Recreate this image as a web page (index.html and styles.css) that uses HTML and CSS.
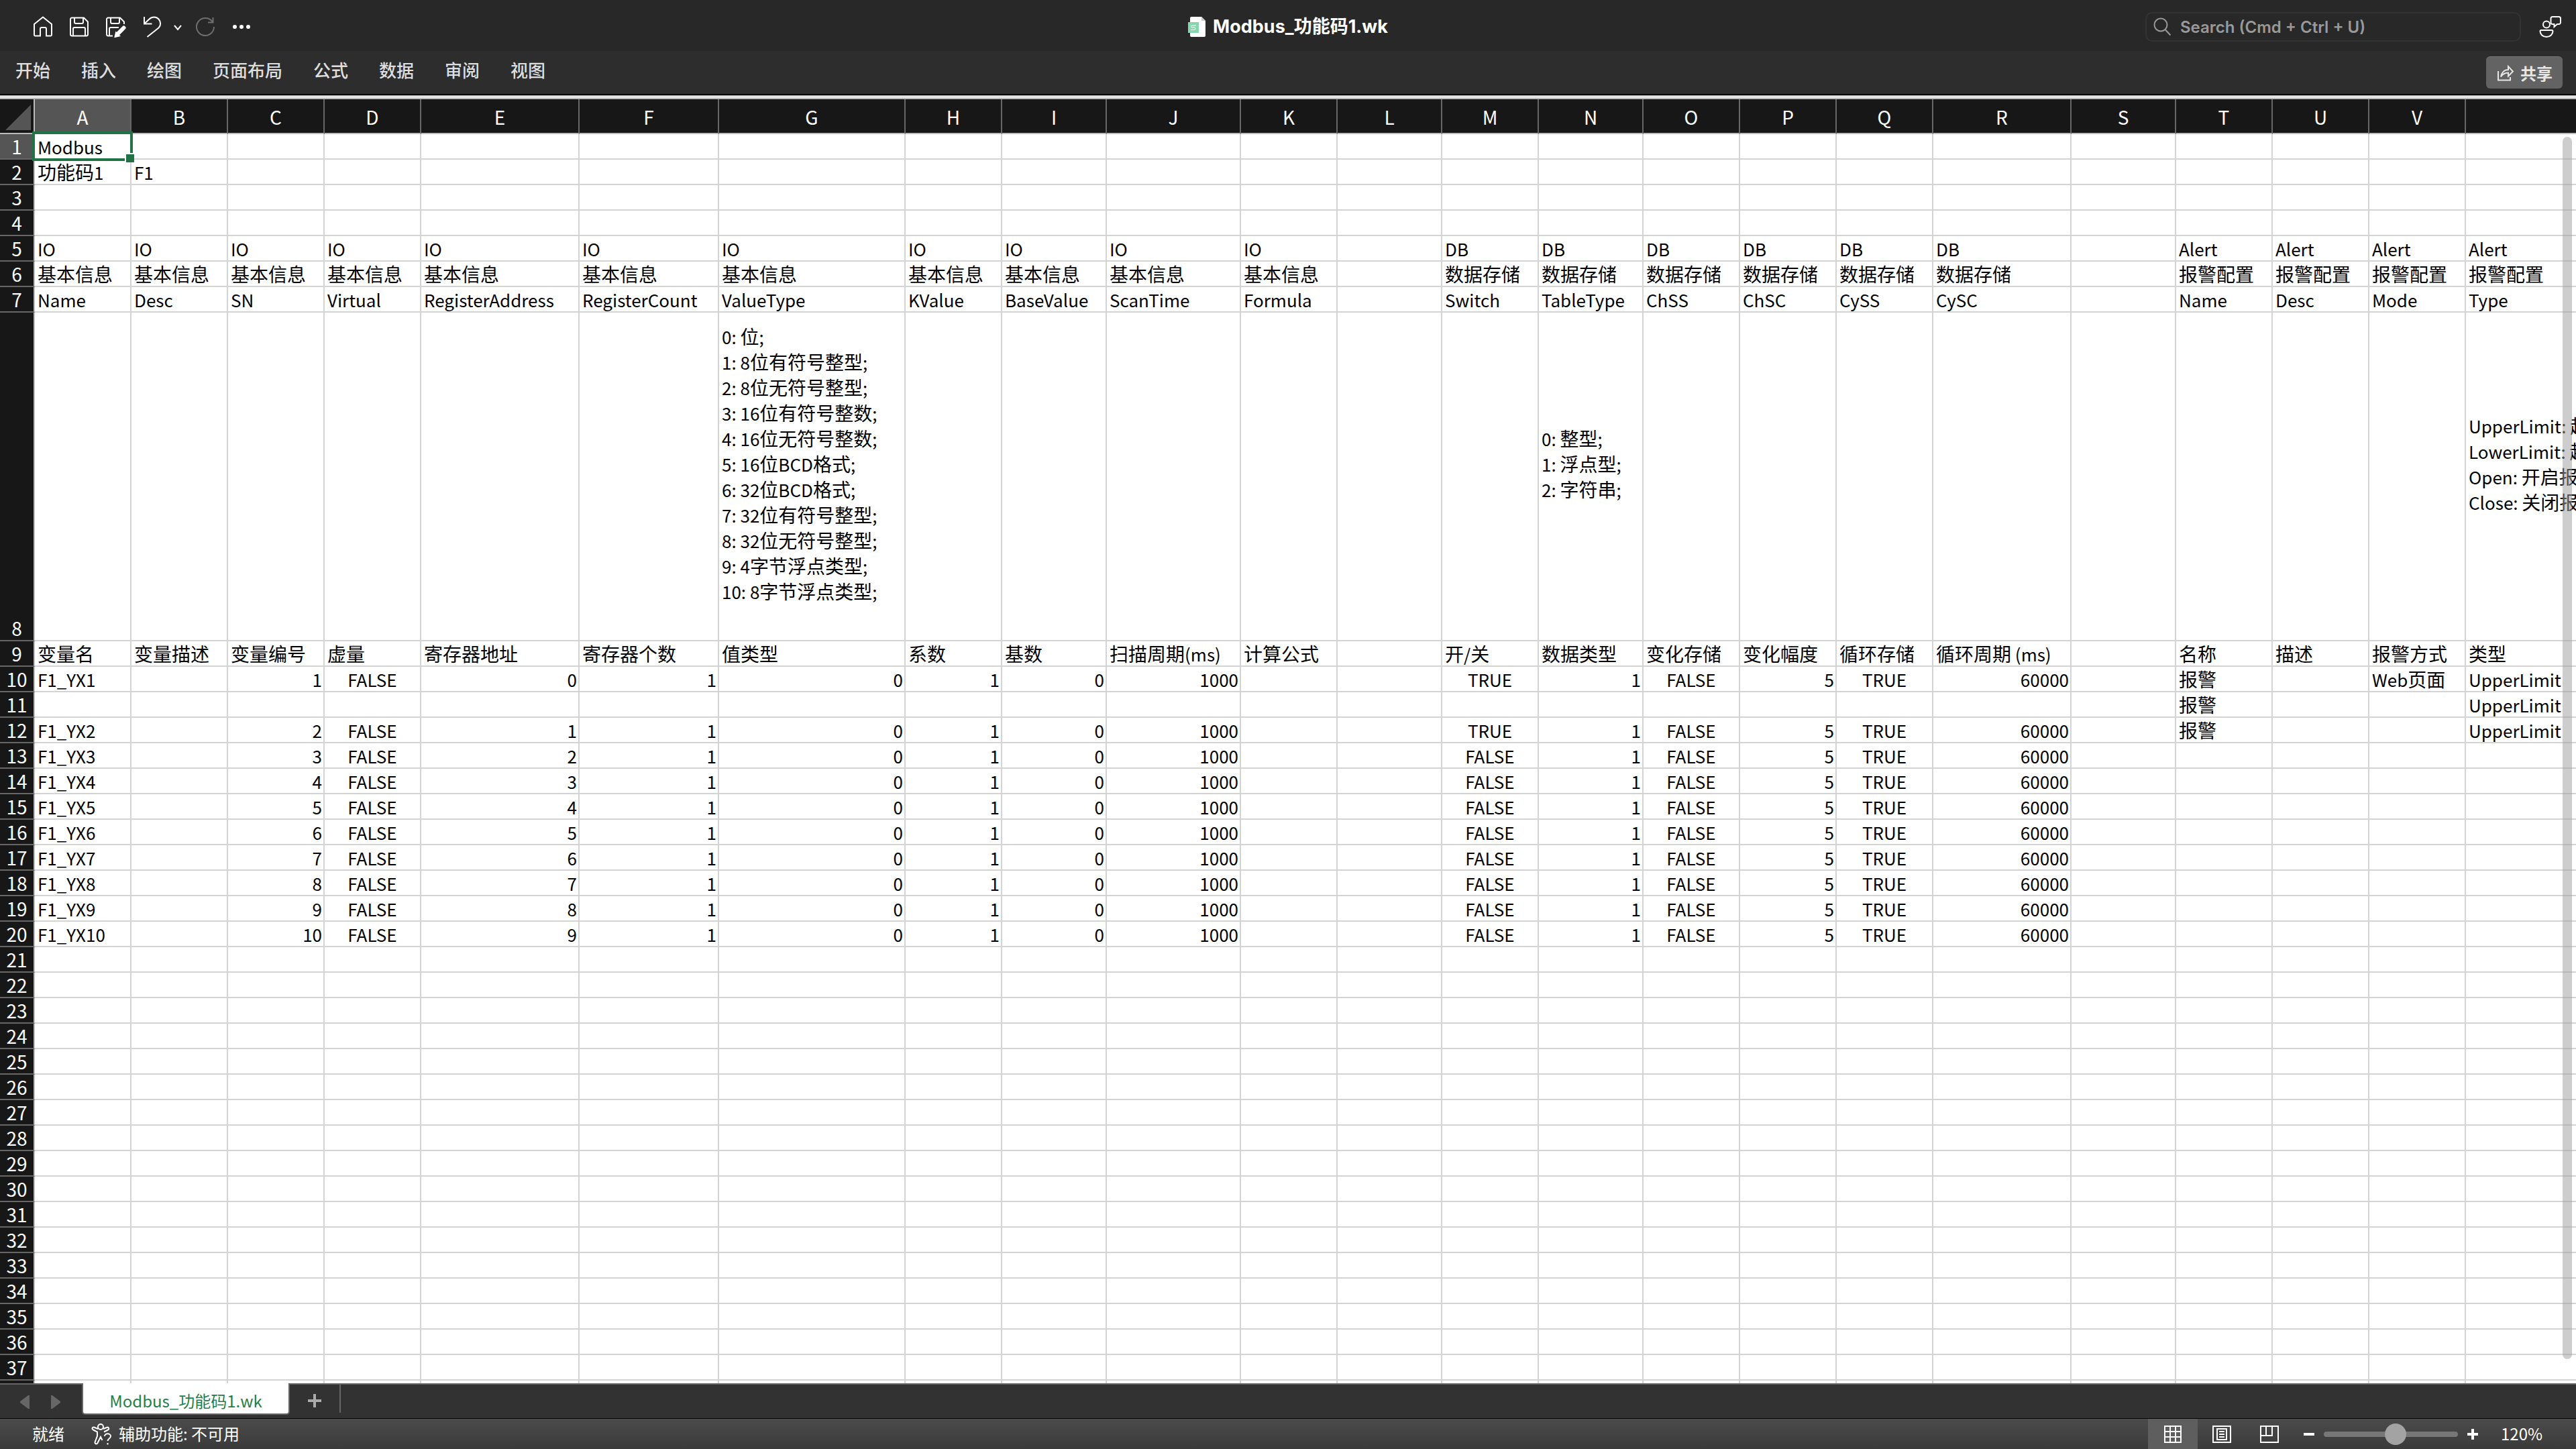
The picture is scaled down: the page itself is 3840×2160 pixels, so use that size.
FILE: index.html
```html
<!DOCTYPE html>
<html lang="zh-CN">
<head>
    <meta charset="UTF-8">
    <title>Modbus_功能码1.wk</title>
    <link rel="stylesheet" href="styles.css">
    <script src="script.js" defer></script>
</head>
<body>
    <header class="titlebar">
        <div class="quick">
            <button class="icon-btn" aria-label="主页"><svg width="32" height="32" viewBox="0 0 32 32"><path d="M3 28V12L16 1.500 29 12v16a1.500 1.500 0 0 1-1.500 1.500H21V19a2 2 0 0 0-2-2h-5a2 2 0 0 0-2 2v10.500H4.500A1.500 1.500 0 0 1 3 28z"/></svg></button>
            <button class="icon-btn" aria-label="保存"><svg width="32" height="32" viewBox="0 0 32 32"><path d="M5 2.500h18l6 6V27a2.500 2.500 0 0 1-2.500 2.500h-21A2.500 2.500 0 0 1 3 27V4.500a2 2 0 0 1 2-2zM9 2.500V9a2 2 0 0 0 2 2h9a2 2 0 0 0 2-2V2.500M7 29V19a2 2 0 0 1 2-2h14a2 2 0 0 1 2 2v10"/></svg></button>
            <button class="icon-btn" aria-label="另存为"><svg width="32" height="32" viewBox="0 0 32 32"><path d="M12 29.500H5.500A2.500 2.500 0 0 1 3 27V4.500a2 2 0 0 1 2-2h18l6 6V12M9 2.500V9a2 2 0 0 0 2 2h9a2 2 0 0 0 2-2V2.500M7 29V19a2 2 0 0 1 2-2h12"/><path class="pen" d="M28.500 17.500L19 27"/><path class="fill" d="M17 24.500L15.500 31l6.500-1.500z"/></svg></button>
            <button class="icon-btn" aria-label="撤消"><svg width="32" height="32" viewBox="0 0 32 32"><path d="M5 1v10.500h11.500M5 11.500l7.500-7c4-4 10.500-4 14 0s3.500 9.500 0 13L9.500 31"/></svg></button>
            <button class="icon-btn caret" aria-label="撤消列表"><svg width="14" height="32" viewBox="0 0 14 32"><path d="M2 14l5 6 5-6"/></svg></button>
            <button class="icon-btn dim" aria-label="重做"><svg width="32" height="32" viewBox="0 0 32 32"><path d="M25.500 2v7.500H18M25 9A13 13 0 1 0 27 16"/></svg></button>
            <button class="icon-btn" aria-label="更多"><svg width="32" height="32" viewBox="0 0 32 32"><circle class="fill" cx="4" cy="16" r="2"/><circle class="fill" cx="14" cy="16" r="2"/><circle class="fill" cx="24" cy="16" r="2"/></svg></button>
        </div>
        <h1 class="doc-title">
            <svg width="26" height="32" viewBox="0 0 26 32"><path fill="#fff" d="M5 1h15l6 6v22a2 2 0 0 1-2 2H5a2 2 0 0 1-2-2V3a2 2 0 0 1 2-2z"/><path fill="#ccc" d="M20 1l6 6h-6z"/><path fill="#84d6ad" d="M0 9h16v16H0z"/><path fill="none" stroke="#fff" d="M12 14H6a1.500 1.500 0 0 0 0 3h4a2 2 0 0 1 0 3.500H4"/></svg>
            Modbus_功能码1.wk
        </h1>
        <div class="title-right">
            <label class="search">
                <svg width="28" height="28" viewBox="0 0 28 28"><circle cx="11" cy="11" r="9.500"/><path d="M17.500 18l8 8.500"/></svg>
                <input type="text" placeholder="Search (Cmd + Ctrl + U)" aria-label="Search">
            </label>
            <button class="icon-btn" aria-label="反馈"><svg width="34" height="34" viewBox="0 0 34 34"><circle cx="12" cy="13.500" r="5"/><path d="M4 22h16a1.500 1.500 0 0 1 1.500 1.500C21.500 28 17.500 32 12 32s-9.500-4-9.500-8.500A1.500 1.500 0 0 1 4 22zM21 2h9.500A2.500 2.500 0 0 1 33 4.500v6a2.500 2.500 0 0 1-2.500 2.500H28l-4.500 4V13H21a2.500 2.500 0 0 1-2.500-2.500v-6A2.500 2.500 0 0 1 21 2z"/></svg></button>
        </div>
    </header>
    <nav class="ribbon">
        <a href="#">开始</a>
        <a href="#">插入</a>
        <a href="#">绘图</a>
        <a href="#">页面布局</a>
        <a href="#">公式</a>
        <a href="#">数据</a>
        <a href="#">审阅</a>
        <a href="#">视图</a>
        <button class="share"><svg width="26" height="26" viewBox="0 0 26 26"><path d="M2 10v13.500h18V19M6 18.500c1-6 5-10.500 11-10.500V3l7 7.500-7 7v-5c-5 0-8.500 2-11 6z"/></svg>共享</button>
    </nav>
    <div class="splitter"></div>
    <main class="sheet">
        <table class="grid" id="grid"></table>
        <div class="scrollbar"></div>
    </main>
    <div class="tabs">
        <button class="arrow" aria-label="上一个工作表"><svg width="14" height="20" viewBox="0 0 14 20"><path d="M14 0v20h-2L0 11V9l12-9z"/></svg></button>
        <button class="arrow" aria-label="下一个工作表"><svg width="14" height="20" viewBox="0 0 14 20"><path d="M0 0v20h2l12-9V9L2 0z"/></svg></button>
        <button class="tab">Modbus_功能码1.wk</button>
        <button class="add" aria-label="新建工作表"><svg width="20" height="20" viewBox="0 0 20 20"><path d="M10 0v20M0 10h20"/></svg></button>
    </div>
    <footer class="status">
        <span>就绪</span>
        <svg class="access" width="32" height="32" viewBox="0 0 32 32"><circle cx="14" cy="5" r="4"/><path d="M10 8L4 5.500C1.500 5 .500 8 3 9.500l6 3v6L5.500 28c0 3 3 3 4 1l4.500-9 2.500 5M18 8l6-2.500c2.500 0 3 3 1 4L19 12.500"/><path d="M20 19c0-5 9-5 9 0 0 3.500-4.500 3.500-4.500 7M24.500 29v2.500"/></svg>
        <span>辅助功能: 不可用</span>
        <div class="views">
            <button class="view active" aria-label="普通"><svg width="28" height="28" viewBox="0 0 28 28"><path d="M2 2h24v24H2zM10 2v24M18 2v24M2 10h24M2 18h24"/></svg></button>
            <button class="view" aria-label="页面布局"><svg width="28" height="28" viewBox="0 0 28 28"><path d="M1 2h26v24H1zM7 6h14v16H7zM10 10h8M10 14h8M10 18h8"/></svg></button>
            <button class="view" aria-label="分页预览"><svg width="28" height="28" viewBox="0 0 28 28"><path d="M1 2h26v24H1zM9 2v14M18 2v14H1"/></svg></button>
        </div>
        <button class="zoom-btn" aria-label="缩小"><svg width="16" height="16" viewBox="0 0 16 16"><path d="M0 8h16"/></svg></button>
        <input class="zoom" type="range" min="0" max="100" value="54" aria-label="缩放">
        <button class="zoom-btn" aria-label="放大"><svg width="16" height="16" viewBox="0 0 16 16"><path d="M0 8h16M8 0v16"/></svg></button>
        <span class="percent">120%</span>
    </footer>
</body>
</html>
```

FILE: styles.css
```css
* {
    box-sizing: border-box;
}
body {
    margin: 0;
    height: 100vh;
    display: flex;
    flex-direction: column;
    overflow: hidden;
    font-family: "Noto Sans CJK SC", sans-serif;
    font-size: 24px;
    color: #fff;
    background-color: #282828;
}
button, input {
    font: inherit;
    color: inherit;
    background: none;
    border: 0;
    margin: 0;
    padding: 0;
}
svg {
    display: block;
    fill: none;
}

/* title bar */
.titlebar {
    flex: none;
    height: 76px;
    padding: 4px 22px 0;
    display: grid;
    grid-template-columns: 1fr auto 1fr;
    align-items: center;
}
.quick {
    display: flex;
    gap: 22px;
    padding-left: 26px;
}
.icon-btn svg {
    stroke: #fff;
    stroke-width: 2;
}
.icon-btn .fill {
    fill: #fff;
}
.icon-btn .pen {
    stroke-width: 6;
    stroke-linecap: round;
}
.caret {
    margin: 0 -2px 0 -6px;
}
.dim svg {
    stroke: #6e6e6e;
}
.doc-title {
    margin: 0;
    display: flex;
    align-items: center;
    gap: 11px;
    font-family: Inter, "Noto Sans CJK SC", sans-serif;
    font-size: 27px;
    line-height: 32px;
    font-weight: bold;
}
.title-right {
    display: flex;
    justify-content: flex-end;
    align-items: center;
    gap: 26px;
}
.search {
    width: 560px;
    height: 44px;
    display: flex;
    align-items: center;
    gap: 12px;
    padding-left: 10px;
    border: 2px solid #333;
    border-radius: 10px;
    font-family: Inter, sans-serif;
    font-size: 24px;
    font-weight: 600;
}
.search svg {
    stroke: #999;
    stroke-width: 2;
}
.search input {
    flex: 1;
}
.search input::placeholder {
    color: #999;
}

/* ribbon */
.ribbon {
    flex: none;
    height: 66px;
    padding: 0 20px 0 23px;
    display: flex;
    align-items: center;
    gap: 46px;
    background-color: #2d2d2d;
    border-bottom: 2px solid #000;
}
.ribbon a {
    color: #dedede;
    font-size: 26px;
    line-height: 40px;
    font-weight: 500;
    text-decoration: none;
    padding-bottom: 8px;
}
.share {
    margin-left: auto;
    display: flex;
    align-items: center;
    gap: 9px;
    width: 114px;
    height: 48px;
    padding-left: 16px;
    color: #e6e6e6;
    font-weight: bold;
    background-color: #636363;
    border-top: 1px solid #7a7a7a;
    border-radius: 6px;
}
.share svg {
    stroke: #e6e6e6;
    stroke-width: 2;
}
.splitter {
    flex: none;
    height: 6px;
    background: linear-gradient(#a8a8a8, #f4f4f4 40%, #dcdcdc 60%, #999);
}

/* sheet */
.sheet {
    flex: 1;
    min-height: 0;
    position: relative;
    overflow: hidden;
    background-color: #fff;
}
.grid {
    table-layout: fixed;
    width: 0;
    border-collapse: separate;
    border-spacing: 0;
    color: #000;
    font-size: 28px;
    line-height: 36px;
}
.grid th, .grid td {
    height: 38px;
    padding: 0 4px;
    border-right: 2px solid #d4d4d4;
    border-bottom: 2px solid #d4d4d4;
    white-space: nowrap;
    text-align: left;
}
.grid td.num {
    padding-right: 2px;
    text-align: right;
}
.grid td.bool {
    text-align: center;
}
.grid th {
    color: #fff;
    background-color: #171717;
    border-color: #666;
    font-weight: normal;
    text-align: center;
}
.grid thead th {
    height: 52px;
    padding-top: 2px;
    border-bottom-color: #bbb;
}
.grid tbody th {
    padding: 0;
    border-right-color: #bbb;
    vertical-align: bottom;
}
.grid thead .corner {
    padding: 8px 0 0 8px;
    border-right-color: #bbb;
    vertical-align: top;
}
.grid .current {
    background-color: #555;
}
.grid td.notes {
    white-space: pre;
    line-height: 38px;
}
.grid .tall td {
    height: 490px;
}
.latin {
    font-size: 26px;
    line-height: 1;
}
.selected {
    position: relative;
}
.selected::before {
    content: "";
    position: absolute;
    inset: -4px;
    border: 4px solid #217346;
}
.selected::after {
    content: "";
    position: absolute;
    right: -6px;
    bottom: -6px;
    width: 12px;
    height: 12px;
    background-color: #217346;
    border-top: 2px solid #fff;
    border-left: 2px solid #fff;
}
.scrollbar {
    position: absolute;
    top: 56px;
    right: 6px;
    bottom: 36px;
    width: 14px;
    border-radius: 7px;
    background-color: rgba(155, 155, 155, .5);
}

/* sheet tabs */
.tabs {
    flex: none;
    height: 52px;
    display: flex;
    align-items: flex-start;
    background-color: #323232;
    border-top: 2px solid #666;
    padding-left: 30px;
}
.arrow {
    margin: 16px 32px 0 0;
}
.arrow svg {
    fill: #666;
}
.tab {
    width: 310px;
    height: 47px;
    margin-top: -2px;
    padding-top: 6px;
    line-height: 36px;
    color: #1f7f4a;
    background-color: #fff;
    border: 2px solid #666;
    border-top: 0;
    border-radius: 0 0 5px 5px;
}
.add {
    height: 42px;
    padding: 6px 27px 0;
    border-right: 2px solid #666;
}
.add svg {
    stroke: #aaa;
    stroke-width: 4;
}

/* status bar */
.status {
    flex: none;
    height: 46px;
    display: flex;
    align-items: center;
    padding: 0 48px;
    border-top: 1px solid #000;
    background: linear-gradient(#4b4b4b, #3a3a3a);
}
.status span {
    padding-bottom: 2px;
}
.access {
    margin: 0 9px 0 40px;
    stroke: #fff;
    stroke-width: 2;
}
.views {
    display: flex;
    align-self: stretch;
    margin-left: auto;
}
.view {
    width: 71px;
    display: flex;
    align-items: center;
    justify-content: center;
}
.view.active {
    width: 74px;
    background-color: #5e5e5e;
}
.view svg {
    stroke: #fff;
    stroke-width: 2;
}
.zoom-btn svg {
    stroke: #fff;
    stroke-width: 4;
}
.views + .zoom-btn {
    margin-left: 16px;
}
.zoom {
    appearance: none;
    width: 200px;
    height: 8px;
    margin: 0 14px;
    border-radius: 4px;
    background-color: #777;
}
.zoom::-webkit-slider-thumb {
    appearance: none;
    width: 32px;
    height: 32px;
    border-radius: 50%;
    background-color: #a3a3a3;
}
.percent {
    width: 64px;
    margin-left: 34px;
}
```

FILE: script.js
```js
const columns = [
    ["A", 144], ["B", 144], ["C", 144], ["D", 144], ["E", 236], ["F", 208],
    ["G", 278], ["H", 144], ["I", 156], ["J", 200], ["K", 144], ["L", 156],
    ["M", 144], ["N", 156], ["O", 144], ["P", 144], ["Q", 144], ["R", 206],
    ["S", 156], ["T", 144], ["U", 144], ["V", 144], ["W", 400]
];

const rows = {
    1: ["Modbus"],
    2: ["功能码1", "F1"],
    5: Array(11).fill("IO").concat("", Array(6).fill("DB"), "", Array(4).fill("Alert")),
    6: Array(11).fill("基本信息").concat("", Array(6).fill("数据存储"), "", Array(4).fill("报警配置")),
    7: ["Name", "Desc", "SN", "Virtual", "RegisterAddress", "RegisterCount", "ValueType", "KValue",
        "BaseValue", "ScanTime", "Formula", "", "Switch", "TableType", "ChSS", "ChSC", "CySS", "CySC",
        "", "Name", "Desc", "Mode", "Type"],
    8: [],
    9: ["变量名", "变量描述", "变量编号", "虚量", "寄存器地址", "寄存器个数", "值类型", "系数", "基数",
        "扫描周期(ms)", "计算公式", "", "开/关", "数据类型", "变化存储", "变化幅度", "循环存储",
        "循环周期 (ms)", "", "名称", "描述", "报警方式", "类型"]
};

// each note ends with an empty line
rows[8][6] = "0: 位;\n1: 8位有符号整型;\n2: 8位无符号整型;\n3: 16位有符号整数;\n4: 16位无符号整数;\n" +
    "5: 16位BCD格式;\n6: 32位BCD格式;\n7: 32位有符号整型;\n8: 32位无符号整型;\n9: 4字节浮点类型;\n10: 8字节浮点类型;\n\n";
rows[8][13] = "0: 整型;\n1: 浮点型;\n2: 字符串;\n\n";
rows[8][22] = "UpperLimit: 越上限\nLowerLimit: 越下限\nOpen: 开启报警\nClose: 关闭报警\n\n";

// variables F1_YX1 to F1_YX10, row 11 holds only a second alert of the first one
for (let i = 1; i <= 10; i++) {
    rows[i === 1 ? 10 : i + 10] = ["F1_YX" + i, "", i, false, i - 1, 1, 0, 1, 0, 1000, "", "",
        i < 3, 1, false, 5, true, 60000];
}
rows[11] = [];
for (const n of [10, 11, 12]) {
    rows[n][19] = "报警";
    rows[n][22] = "UpperLimit";
}
rows[10][21] = "Web页面";

const grid = document.getElementById("grid");

function addCell(row, tag, html, className) {
    const cell = document.createElement(tag);
    cell.innerHTML = html;
    if (className) cell.className = className;
    row.appendChild(cell);
}

// latin letters and digits are set a little smaller than the Chinese text
function wrapLatin(value) {
    return String(value).replace(/[ -~]+/g, '<span class="latin">$&</span>');
}

const colgroup = document.createElement("colgroup");
for (const width of [52, ...columns.map(c => c[1])]) {
    const col = document.createElement("col");
    col.style.width = width + "px";
    colgroup.appendChild(col);
}
grid.appendChild(colgroup);

const head = grid.createTHead().insertRow();
addCell(head, "th", '<svg width="38" height="38" viewBox="0 0 38 38"><path fill="#555" d="M38 0v38H0z"/></svg>', "corner");
columns.forEach(([name], i) => addCell(head, "th", name, i === 0 ? "current" : ""));

const body = grid.createTBody();
for (let n = 1; n <= 38; n++) {
    const row = body.insertRow();
    if (n === 8) row.className = "tall";
    addCell(row, "th", n, n === 1 ? "current" : "");
    columns.forEach((column, i) => {
        let value = rows[n] && rows[n][i] !== undefined ? rows[n][i] : "";
        let className = "";
        if (n === 1 && i === 0) className = "selected";
        if (typeof value === "number") className = "num";
        if (typeof value === "boolean") {
            className = "bool";
            value = String(value).toUpperCase();
        }
        if (n === 8 && value) className = "notes";
        addCell(row, "td", wrapLatin(value), className);
    });
}
```
